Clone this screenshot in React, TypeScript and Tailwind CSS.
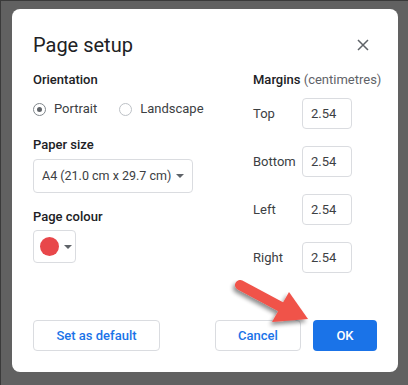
const margins = [
  { label: "Top", value: "2.54" },
  { label: "Bottom", value: "2.54" },
  { label: "Left", value: "2.54" },
  { label: "Right", value: "2.54" },
]

function Caret() {
  return (
    <svg width="8" height="4" viewBox="0 0 8 4" className="shrink-0">
      <path d="M0 0 L8 0 L4 4 Z" fill="#5f6368" />
    </svg>
  )
}

function Radio({ checked, label }: { checked?: boolean; label: string }) {
  return (
    <div className="flex items-center gap-[8px]">
      <span
        className={
          checked
            ? "w-[13px] h-[13px] rounded-full border border-[#80868b] flex items-center justify-center"
            : "w-[13px] h-[13px] rounded-full border border-[#bdc1c6]"
        }
      >
        {checked && <span className="w-[5px] h-[5px] rounded-full bg-[#5f6368]" />}
      </span>
      <span className="text-[13px] text-[#3c4043]">{label}</span>
    </div>
  )
}

export default function App() {
  return (
    <div
      className="relative w-[408px] h-[385px] bg-[#616161] pt-[8px] pl-[11px] border-t border-l border-[#3a3a3a] overflow-hidden"
      style={{ fontFamily: "Roboto, 'Liberation Sans', sans-serif" }}
    >
      <div className="w-[386px] h-[363px] bg-white rounded-[8px] flex flex-col px-[21px] pt-[22px] pb-[21px]">
        <div className="flex items-center justify-between h-[28px]">
          <h1 className="text-[20px] text-[#202124] leading-[28px]">Page setup</h1>
          <svg width="12" height="12" viewBox="0 0 12 12" className="mr-[8px]">
            <path d="M1 1 L11 11 M11 1 L1 11" stroke="#5f6368" strokeWidth="1.5" />
          </svg>
        </div>

        <div className="flex mt-[11px]">
          <div className="w-[220px] shrink-0 flex flex-col">
            <p className="text-[13px] font-medium text-[#202124] leading-[20px]">Orientation</p>
            <div className="flex items-center gap-[22px] mt-[9px] h-[20px]">
              <Radio checked label="Portrait" />
              <Radio label="Landscape" />
            </div>
            <p className="text-[13px] font-medium text-[#202124] leading-[20px] mt-[16px]">Paper size</p>
            <div className="mt-[4px] w-[160px] h-[34px] border border-[#dadce0] rounded-[4px] flex items-center justify-between pl-[8px] pr-[8px]">
              <span className="text-[12.5px] text-[#3c4043] whitespace-nowrap">A4 (21.0 cm x 29.7 cm)</span>
              <Caret />
            </div>
            <p className="text-[13px] font-medium text-[#202124] leading-[20px] mt-[14px]">Page colour</p>
            <div className="mt-[3px] w-[43px] h-[33px] border border-[#dadce0] rounded-[4px] flex items-center pl-[6px] gap-[5px]">
              <span className="w-[19px] h-[19px] rounded-full bg-[#e8474a]" />
              <Caret />
            </div>
          </div>

          <div className="flex flex-col">
            <p className="text-[13px] leading-[20px] whitespace-nowrap">
              <span className="font-medium text-[#202124]">Margins</span>
              <span className="text-[#5f6368]"> (centimetres)</span>
            </p>
            <div className="flex flex-col gap-[17px] mt-[8px]">
              {margins.map((m) => (
                <div key={m.label} className="flex items-center">
                  <span className="w-[49px] text-[13px] text-[#3c4043]">{m.label}</span>
                  <div className="w-[50px] h-[31px] border border-[#dadce0] rounded-[4px] flex items-center pl-[8px] text-[13px] text-[#3c4043]">
                    {m.value}
                  </div>
                </div>
              ))}
            </div>
          </div>
        </div>

        <div className="mt-auto flex items-center">
          <button className="w-[127px] h-[31px] border border-[#dadce0] rounded-[4px] text-[13px] font-medium text-[#1a73e8]">
            Set as default
          </button>
          <button className="ml-auto w-[86px] h-[31px] border border-[#dadce0] rounded-[4px] text-[13px] font-medium text-[#1a73e8]">
            Cancel
          </button>
          <button className="ml-[12px] w-[64px] h-[31px] rounded-[4px] bg-[#1a73e8] text-[13px] font-medium text-white">
            OK
          </button>
        </div>
      </div>

      <svg
        className="absolute left-0 top-0 pointer-events-none"
        width="408"
        height="385"
        viewBox="0 0 408 385"
      >
        <defs>
          <filter id="sh" x="-20%" y="-20%" width="150%" height="150%">
            <feGaussianBlur in="SourceAlpha" stdDeviation="2" />
            <feOffset dx="-2" dy="3" />
            <feComponentTransfer>
              <feFuncA type="linear" slope="0.45" />
            </feComponentTransfer>
            <feMerge>
              <feMergeNode />
              <feMergeNode in="SourceGraphic" />
            </feMerge>
          </filter>
        </defs>
        <g filter="url(#sh)" fill="#f0524a">
          <line x1="239" y1="284" x2="282" y2="307" stroke="#f0524a" strokeWidth="10" strokeLinecap="round" />
          <polygon points="271,321 288,291 307,318" />
        </g>
      </svg>
    </div>
  )
}
